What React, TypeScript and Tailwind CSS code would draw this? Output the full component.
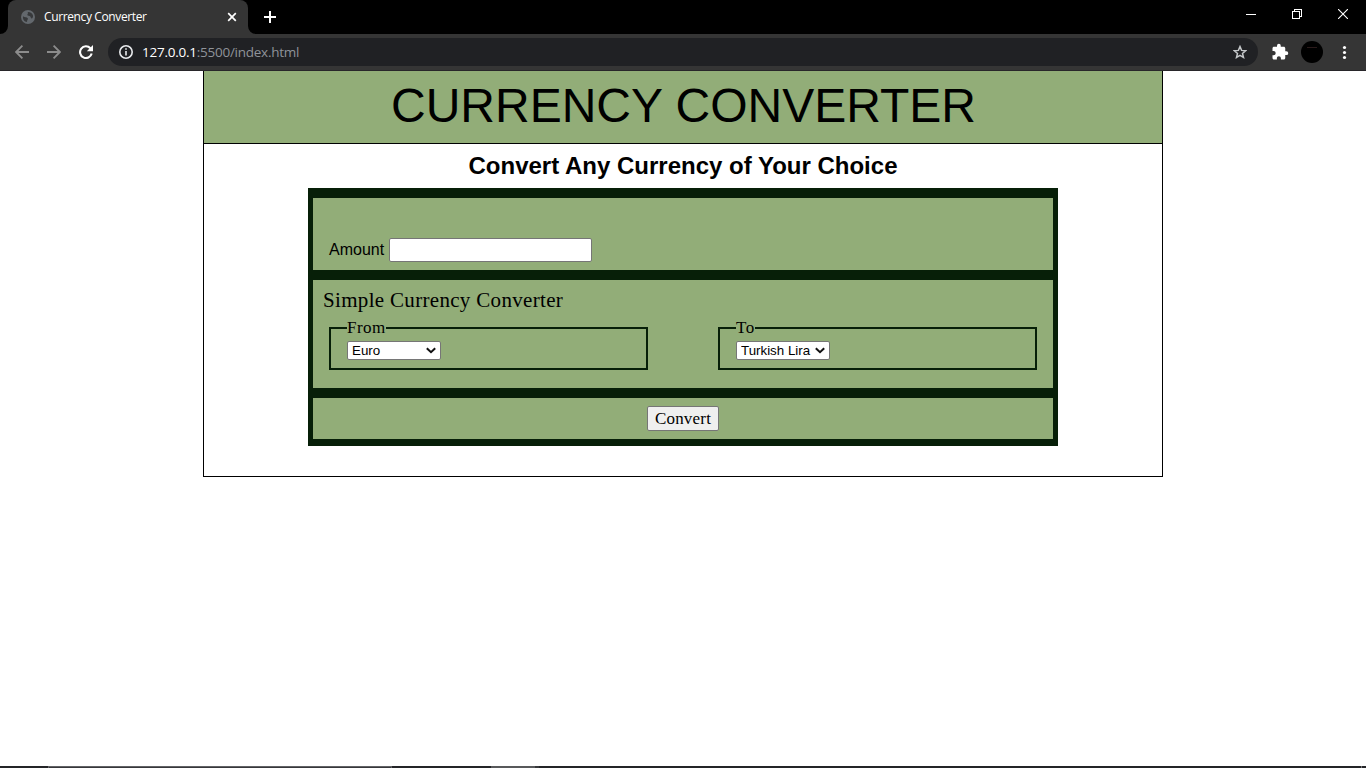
import React from 'react';
import { MdExtension } from 'react-icons/md';

function TabStrip() {
  return (
    <div className="flex h-[34px] bg-black">
      <svg className="h-[34px] w-2 shrink-0" viewBox="0 0 8 34">
        <path d="M0 34 A8 8 0 0 0 8 26 V34 Z" fill="#353535" />
      </svg>
      <div className="flex w-60 items-center rounded-t-lg bg-[#353535] pl-[13px] text-white">
        <svg width="14" height="14" viewBox="0 0 14 14">
          <circle cx="7" cy="7" r="7" fill="#63686d" />
          <path
            d="M2 6.2 C3.6 7.6 6 6.8 6.8 8.2 C7.4 9.4 5.8 10 6 12 C3.4 11.6 1.6 9.4 2 6.2 Z M6.4 2 C8.6 1.5 11.4 2.8 12 5.6 C12.2 7.6 11.4 8.6 10.6 8.4 C9.4 8.2 10 6.4 8.6 6 C7 5.6 6.2 5.6 6.4 4.4 C6.6 3.4 8 3.4 6.4 2 Z"
            fill="#37393b"
          />
        </svg>
        <span className="ml-[9px] w-[183px] font-['Open_Sans',sans-serif] text-[12px] tracking-[-0.38px]">
          Currency Converter
        </span>
        <svg width="10" height="10" viewBox="0 0 10 10" stroke="#fff" strokeWidth="1.7">
          <path d="M1.2 1.2 L8.8 8.8 M8.8 1.2 L1.2 8.8" />
        </svg>
      </div>
      <svg className="h-[34px] w-2 shrink-0" viewBox="0 0 8 34">
        <path d="M8 34 A8 8 0 0 1 0 26 V34 Z" fill="#353535" />
      </svg>
      <svg className="ml-2 mt-[11px]" width="12" height="12" viewBox="0 0 12 12" stroke="#fff" strokeWidth="2">
        <path d="M6 0 V12 M0 6 H12" />
      </svg>
      <div className="ml-auto flex h-7 items-center gap-9 pr-[18px]">
        <svg width="10" height="10" viewBox="0 0 10 10" stroke="#fff" shapeRendering="crispEdges">
          <path d="M0 5.5 H10" />
        </svg>
        <svg width="10" height="10" viewBox="0 0 10 10" fill="none" stroke="#fff" shapeRendering="crispEdges">
          <path d="M0.5 2.5 H7.5 V9.5 H0.5 Z M2.5 2.5 V0.5 H9.5 V7.5 H7.5" />
        </svg>
        <svg width="10" height="10" viewBox="0 0 10 10" stroke="#fff" strokeWidth="1.1">
          <path d="M0 0 L10 10 M10 0 L0 10" />
        </svg>
      </div>
    </div>
  );
}

function Toolbar() {
  return (
    <div className="flex h-[37px] items-center border-b border-[#28262a] bg-[#353535] pl-[15px]">
      <svg width="14" height="14" viewBox="0 0 14 14" fill="none" stroke="#8c8c8c" strokeWidth="1.8">
        <path d="M14 7 H1.4 M7.4 0.7 L1.1 7 L7.4 13.3" />
      </svg>
      <svg className="ml-[18px]" width="14" height="14" viewBox="0 0 14 14" fill="none" stroke="#8c8c8c" strokeWidth="1.8">
        <path d="M0 7 H12.6 M6.6 0.7 L12.9 7 L6.6 13.3" />
      </svg>
      <svg className="ml-[18px]" width="14" height="14" viewBox="0 0 14 14" fill="none" stroke="#fff" strokeWidth="2.1">
        <path d="M11.4 3.2 A5.9 5.9 0 1 0 12.7 8.6" />
        <path d="M14 0 V6.2 H7.8 Z" fill="#fff" stroke="none" />
      </svg>
      <div className="ml-[15px] flex h-7 w-[1150px] items-center rounded-full bg-[#202124] pl-[11px] pr-[11px]">
        <svg width="14" height="14" viewBox="0 0 14 14" fill="none" stroke="#e8eaed" strokeWidth="1.6">
          <circle cx="7" cy="7" r="6.2" />
          <path d="M7 6 V10.6 M7 3.2 V4.8" />
        </svg>
        <span className="ml-[9px] font-['Open_Sans',sans-serif] text-[13.5px] tracking-[-0.25px] text-[#8f9399]">
          <span className="text-white">127.0.0.1</span>:5500/index.html
        </span>
        <svg className="ml-auto" width="14" height="14" viewBox="0 0 14 14" fill="none" stroke="#c4c7c9" strokeWidth="1.5">
          <path d="M7 1.6 L8.6 5.4 L12.6 5.7 L9.5 8.4 L10.5 12.4 L7 10.3 L3.5 12.4 L4.5 8.4 L1.4 5.7 L5.4 5.4 Z" />
        </svg>
      </div>
      <MdExtension className="ml-[13px] size-[18px] text-white" />
      <div className="ml-3 flex size-[22px] justify-center rounded-full bg-black pt-[6px]">
        <div className="h-px w-[10px] bg-[#2a1a1a]" />
      </div>
      <svg className="ml-[19px]" width="5" height="15" viewBox="0 0 5 15" fill="#fff">
        <circle cx="2.5" cy="2.5" r="1.6" />
        <circle cx="2.5" cy="7.5" r="1.6" />
        <circle cx="2.5" cy="12.5" r="1.6" />
      </svg>
    </div>
  );
}

function CurrencyField({ label, value, options }: { label: string; value: string; options: string[] }) {
  return (
    <fieldset className="h-[51px] w-[319px] border-2 border-[#071f08] pl-4">
      <legend className="h-[18px] font-['Liberation_Serif',serif] text-[17px] leading-[18px] tracking-[0.5px]">
        {label}
      </legend>
      <div className="relative mt-1 h-[19px] w-[94px]">
        <select
          defaultValue={value}
          className="block h-[19px] w-[94px] appearance-none rounded-[2px] border border-[#767676] bg-white pl-1 font-['Liberation_Sans',sans-serif] text-[13.333px] leading-[17px]"
        >
          {options.map((o) => (
            <option key={o}>{o}</option>
          ))}
        </select>
        <svg
          className="pointer-events-none absolute right-[5px] top-[6px]"
          width="10"
          height="7"
          viewBox="0 0 10 7"
          fill="none"
          stroke="#101010"
          strokeWidth="2"
        >
          <path d="M0.8 1.2 L5 5.2 L9.2 1.2" />
        </svg>
      </div>
    </fieldset>
  );
}

export default function App() {
  const currencies = ['Euro', 'Turkish Lira'];
  return (
    <div className="flex h-screen flex-col overflow-hidden bg-white font-['Liberation_Sans',sans-serif] text-black">
      <TabStrip />
      <Toolbar />
      <main className="mx-auto h-[406px] w-[960px] border-x border-b border-black">
        <h1 className="h-[73px] border-b border-black bg-[#92ad78] pl-px text-center text-[48px] leading-[70px]">
          CURRENCY CONVERTER
        </h1>
        <h2 className="h-[44px] text-center text-[24px] font-bold leading-[44px]">
          Convert Any Currency of Your Choice
        </h2>
        <form className="mx-auto flex h-[258px] w-[750px] flex-col gap-[10px] bg-[#071f08] px-[5px] pb-[7px] pt-[10px]">
          <div className="flex h-[72px] items-end bg-[#92ad78] pb-2 pl-4">
            <label className="flex items-center text-[16px]">
              <span className="w-[60px]">Amount</span>
              <input className="h-6 w-[203px] rounded-[2px] border border-[#767676] bg-white" />
            </label>
          </div>
          <div className="h-[108px] bg-[#92ad78] pt-2">
            <p className="h-[23px] pl-[10px] font-['Liberation_Serif',serif] text-[21px] leading-[24px] tracking-[0.32px]">
              Simple Currency Converter
            </p>
            <div className="mt-2 flex justify-between px-4">
              <CurrencyField label="From" value="Euro" options={currencies} />
              <CurrencyField label="To" value="Turkish Lira" options={currencies} />
            </div>
          </div>
          <div className="flex h-[41px] justify-center bg-[#92ad78] pt-2">
            <button
              type="button"
              className="h-[25px] w-[72px] rounded-[2px] border border-[#767676] bg-[#efefef] font-['Liberation_Serif',serif] text-[17px] leading-[23px] tracking-[0.2px]"
            >
              Convert
            </button>
          </div>
        </form>
      </main>
      <div className="mt-auto flex h-[2px] bg-[#242528]">
        <div className="ml-12 w-[344px] border-x border-t border-[#626366] bg-[#37383b]" />
        <div className="ml-[99px] w-11 bg-[#58595b]" />
        <div className="w-1 bg-[#37383b]" />
        <div className="ml-auto mr-1 w-px bg-[#77787a]" />
      </div>
    </div>
  );
}
